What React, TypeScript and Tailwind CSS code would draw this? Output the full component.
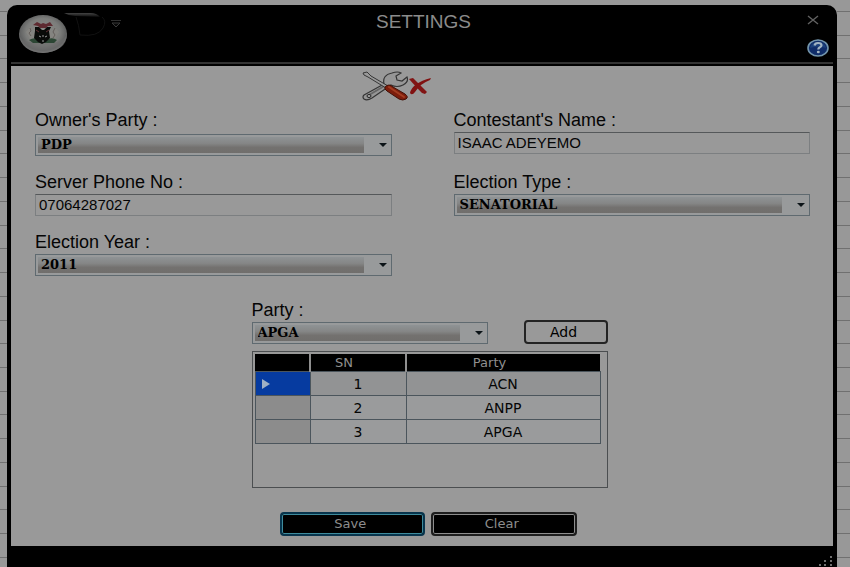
import { useState } from "react";
import type { ReactNode } from "react";

const parties = ["ACN", "ANPP", "APGA"];

// Ruled-paper lines showing on both sides of the window
function Gutter({ className }: { className: string }) {
  return (
    <div aria-hidden className={`flex shrink-0 flex-col justify-between pt-[11px] pb-[9px] ${className}`}>
      {Array.from({ length: 24 }, (_, i) => (
        <div key={i} className="h-px bg-[#707070]" />
      ))}
    </div>
  );
}

function Field({ id, label, className, children }: { id: string; label: string; className: string; children: ReactNode }) {
  return (
    <div className={`flex flex-col ${className}`}>
      <label htmlFor={id} className="text-lg leading-5 whitespace-nowrap">{label}</label>
      {children}
    </div>
  );
}

function TextBox({ id, initial }: { id: string; initial: string }) {
  const [value, setValue] = useState(initial);
  return (
    <input
      id={id}
      value={value}
      onChange={e => setValue(e.target.value)}
      className="h-[22px] w-full border border-[#7c7f81] border-t-[#55585a] bg-[#999999] px-[3px] pb-[2px] text-[15px] leading-4 outline-none"
    />
  );
}

function Combo({ id, options, initial }: { id: string; options: string[]; initial: string }) {
  const [value, setValue] = useState(initial);
  return (
    <div className="relative">
      <select
        id={id}
        value={value}
        onChange={e => setValue(e.target.value)}
        className="block h-[22px] w-full appearance-none border border-[#5f6a70] bg-[#989a9b] bg-[linear-gradient(#8f9395,#858686_40%,#73716f_65%,#706e6c)] bg-[length:calc(100%-29px)_16px] bg-[position:2px_2px] bg-no-repeat pl-[5px] font-['DejaVu_Serif',serif] text-[13px] leading-5 font-bold text-black outline-none"
      >
        {options.map(o => <option key={o}>{o}</option>)}
      </select>
      <svg className="pointer-events-none absolute top-[9px] right-[5px]" width="8" height="4" viewBox="0 0 8 4">
        <path d="M0 0h8L4 4z" fill="#0c1418" />
      </svg>
    </div>
  );
}

function Crest() {
  return (
    <svg width="50" height="40" viewBox="0 0 50 40" aria-hidden>
      <defs>
        <radialGradient id="orb" cx="50%" cy="45%" r="55%">
          <stop offset="0" stopColor="#8c8c88" />
          <stop offset="0.65" stopColor="#7c7d7b" />
          <stop offset="0.88" stopColor="#5f6060" />
          <stop offset="1" stopColor="#868686" />
        </radialGradient>
      </defs>
      <ellipse cx="25" cy="20" rx="24" ry="19" fill="url(#orb)" />
      <path d="M1 20q3 9 11 8l27 0q7-1 10-8q0 17-24 19Q3 38 1 20z" fill="#6c6d6c" opacity="0.6" />
      <path d="M8 18l4-5 2 7 3-5v11l-5-1zM41 18l-4-5-2 7-3-5v11l5-1z" fill="#858480" />
      <path d="M12 14l1 3-2 2 2 3M37 14l-2 4 2 3-2 3" stroke="#655f5b" strokeWidth="1" fill="none" />
      <path d="M15 11l4-3 4 2 2-1 3 1 4-2 3 4-5 0-2 2h-6l-2-2z" fill="#5e2a30" />
      <path d="M11 26q5-3 9-1h10q5-2 9 1l-3 3H15z" fill="#2c4634" />
      <path d="M17 13h4l3 3h2l3-3h4l-2 4 1 7-4 4-4 2-4-2-4-4 1-7z" fill="#090b09" />
      <path d="M25 21v2M25 26v2M21 22l2 1M29 22l-2 1" stroke="#999" strokeWidth="1" fill="none" />
      <path d="M18 16l3 2M31 16l-3 2" stroke="#5c2c30" strokeWidth="1" />
    </svg>
  );
}

function ToolsIcon() {
  return (
    <svg width="70" height="32" viewBox="0 0 70 32" aria-hidden>
      {/* wrench */}
      <path
        d="M2 25L22 14Q20 5 30 3Q36 1 39 3L34 6L35 10L40 11L45 7Q47 12 41 15Q35 18 29 15L10 28Q5 31 2 29Q0 27 2 25z"
        fill="#969696" stroke="#353535" strokeWidth="1.2"
      />
      <path d="M7 25L24 15" stroke="#666" strokeWidth="2" />
      <ellipse cx="7" cy="26" rx="2" ry="1.5" fill="#aaa" stroke="#222" />
      {/* screwdriver */}
      <path d="M1 3L5 2L9 6L26 16L24 18L6 7L2 5z" fill="#999" stroke="#363636" strokeWidth="1" />
      <path d="M23 17Q27 13 31 17L43 24Q47 27 44 29Q41 31 37 29L25 21Q22 19 23 17z" fill="#7d1d0b" stroke="#421006" />
      <path d="M27 17L42 27" stroke="#a33c20" strokeWidth="2" strokeLinecap="round" />
      {/* cross */}
      <path d="M47 9L51 8Q57 14 65 22L63 24L60 23Q55 18 47 9z" fill="#811414" />
      <path d="M69 8L68 10Q59 13 53 22Q50 26 48 23Q50 13 69 8z" fill="#811111" />
    </svg>
  );
}

function TitleBar() {
  return (
    <header className="flex h-[57px] justify-between">
      <div className="flex flex-1 items-start pt-2 pl-[7px]">
        <button type="button" aria-label="Application menu" className="mt-px"><Crest /></button>
        <svg width="44" height="26" viewBox="0 0 44 26" aria-hidden className="-ml-1">
          <defs>
            <linearGradient id="lip" x1="0" y1="0" x2="0" y2="1">
              <stop offset="0" stopColor="#444" />
              <stop offset="1" stopColor="#0a0a0a" />
            </linearGradient>
          </defs>
          <path d="M0 0H26Q33 0 36 4L11 3Q5 3 0 0z" fill="url(#lip)" />
          <path d="M12 4Q15 12 16 22Q34 24 39 15Q43 8 38 4" fill="none" stroke="#111" />
        </svg>
        <button type="button" aria-label="Customize toolbar" className="mt-[7px] ml-[3px]">
          <svg width="10" height="8" viewBox="0 0 10 8">
            <path d="M0 .5h10" stroke="#303030" />
            <path d="M1 3h8L5 7z" fill="#080808" stroke="#3a3a3a" />
          </svg>
        </button>
      </div>
      <h1 className="pt-[7px] text-[19px] leading-5 text-[#8b8b8b]">SETTINGS</h1>
      <div className="flex flex-1 flex-col items-end gap-3 pt-[10px] pr-1">
        <button type="button" aria-label="Close" className="mr-[10px]">
          <svg width="12" height="10" viewBox="0 0 12 10">
            <path d="M1 1l10 8M11 1L1 9" stroke="#626262" strokeWidth="1.4" />
          </svg>
        </button>
        <button type="button" aria-label="Help" className="pt-[2px]">
          <svg width="22" height="18" viewBox="0 0 22 18">
            <ellipse cx="11" cy="9" rx="10" ry="8" fill="#102d69" stroke="#7395ac" strokeWidth="1.6" />
            <path d="M3 9Q4 3 11 3T19 9Q11 6 3 9z" fill="#1c417c" />
            <path d="M7.5 6.5Q8 4 11 4Q14.5 4 14.5 6.3Q14.5 7.6 12.5 8.6Q11.3 9.2 11.3 10.5" fill="none" stroke="#a2b4c2" strokeWidth="2.2" />
            <ellipse cx="11.3" cy="13" rx="1.5" ry="1.2" fill="#a2b4c2" />
          </svg>
        </button>
      </div>
    </header>
  );
}

function PartyTable() {
  const [selected, setSelected] = useState(0);
  return (
    <div className="h-[137px] border border-[#4b4e50] pt-[2px] pr-[6px] pl-[2px]">
      <table className="w-full table-fixed border-collapse text-center font-['DejaVu_Sans',sans-serif] text-sm">
        <colgroup>
          <col className="w-[55px]" />
          <col className="w-[96px]" />
          <col />
        </colgroup>
        <thead>
          <tr className="h-[17px] bg-black text-[13px] leading-4 text-[#8f8f8f]">
            <th aria-label="Row" className="p-0" />
            <th className="border-l-2 border-[#8f8f8f] p-0 pt-px pr-7 font-normal">SN</th>
            <th className="border-l-2 border-[#8f8f8f] p-0 pt-px pr-7 font-normal">Party</th>
          </tr>
        </thead>
        <tbody>
          {parties.map((party, i) => (
            <tr
              key={party}
              onClick={() => setSelected(i)}
              className={i === selected ? "h-6 bg-[#929394]" : "h-6 bg-[#9a9b9c]"}
            >
              <td className={i === selected ? "border border-[#4b555c] bg-[#063ba0] p-0 pl-[6px]" : "border border-[#4b555c] bg-[#8c8c8c] p-0"}>
                {i === selected && (
                  <svg width="8" height="10" viewBox="0 0 8 10"><path d="M0 0l8 5-8 5z" fill="#9fb0c4" /></svg>
                )}
              </td>
              <td className="border border-[#4b555c] p-0 leading-5">{i + 1}</td>
              <td className="border border-[#4b555c] p-0 leading-5">{party}</td>
            </tr>
          ))}
        </tbody>
      </table>
    </div>
  );
}

export default function App() {
  return (
    <div className="flex min-h-screen bg-[#989898] font-['Liberation_Sans',Arial,sans-serif] text-[#050505]">
      <Gutter className="w-[7px]" />
      <main className="mt-[5px] flex min-w-0 flex-1 flex-col rounded-t-[10px] bg-black px-1">
        <TitleBar />
        <div className="mb-[2px] h-[2px] bg-[#333333]" />
        <form className="flex-1 bg-[#999999] pt-1" onSubmit={e => e.preventDefault()}>
          <div className="flex justify-center pr-[51px]"><ToolsIcon /></div>

          <div className="grid grid-cols-2 gap-x-[62px] pt-2 pr-[23px] pl-6">
            <div className="flex flex-col gap-4">
              <Field id="owner" label="Owner's Party :" className="gap-1">
                <Combo id="owner" options={["PDP", ...parties]} initial="PDP" />
              </Field>
              <Field id="phone" label="Server Phone No :" className="gap-[2px]">
                <TextBox id="phone" initial="07064287027" />
              </Field>
              <Field id="year" label="Election Year :" className="gap-[2px]">
                <Combo id="year" options={["2011", "2015"]} initial="2011" />
              </Field>
            </div>
            <div className="flex flex-col gap-[18px]">
              <Field id="contestant" label="Contestant's Name :" className="gap-[2px]">
                <TextBox id="contestant" initial="ISAAC ADEYEMO" />
              </Field>
              <Field id="type" label="Election Type :" className="gap-[2px]">
                <Combo id="type" options={["SENATORIAL", "PRESIDENTIAL"]} initial="SENATORIAL" />
              </Field>
            </div>
          </div>

          <div className="flex justify-center pt-6 pl-[15px]">
            <div className="w-[356px]">
              <div className="flex items-end justify-between">
                <Field id="party" label="Party :" className="w-[236px] gap-[2px]">
                  <Combo id="party" options={parties} initial="APGA" />
                </Field>
                <button type="button" className="h-6 w-[84px] rounded-[4px] border-2 border-[#242424] bg-[#999999] pr-1 font-['DejaVu_Sans',sans-serif] text-sm leading-5 text-black">
                  Add
                </button>
              </div>
              <div className="pt-[7px]"><PartyTable /></div>
              <div className="grid grid-cols-2 gap-[6px] pt-6 pr-[31px] pb-[10px] pl-7 font-['DejaVu_Sans',sans-serif] text-[13px] leading-4 text-[#8d8d8d]">
                <button type="submit" className="h-6 rounded-[4px] border-2 border-[#07344c] bg-black pr-1 ring-1 ring-[#3e8b9c] ring-inset">Save</button>
                <button type="reset" className="h-6 rounded-[4px] border-2 border-[#1d1d1d] bg-black pr-1 ring-1 ring-[#8d8d8d] ring-inset">Clear</button>
              </div>
            </div>
          </div>
        </form>
        <footer className="flex h-[21px] items-end justify-end">
          <svg width="14" height="12" viewBox="0 0 14 12" aria-hidden>
            <path d="M11 1h2v2h-2zM5 5h2v2H5zM11 5h2v2h-2zM0 9h2v2H0zM5 9h2v2H5zM11 9h2v2h-2z" fill="#6f6f6f" />
          </svg>
        </footer>
      </main>
      <Gutter className="w-[13px]" />
    </div>
  );
}
